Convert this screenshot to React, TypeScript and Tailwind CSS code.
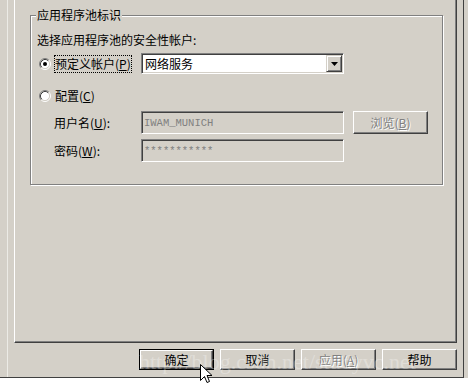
import React from "react";

const sunken =
  "border border-t-[#808080] border-l-[#808080] border-b-white border-r-white shadow-[inset_1px_1px_0_#404040,inset_-1px_-1px_0_#d4d0c8] p-[1px]";
const raised =
  "border border-t-white border-l-white border-b-[#404040] border-r-[#404040] shadow-[inset_-1px_-1px_0_#808080]";
const disabledText = "text-[#808080] [text-shadow:1px_1px_0_#fff]";

function Radio({ checked }: { checked?: boolean }) {
  return (
    <svg width="12" height="12" viewBox="0 0 12 12" className="shrink-0">
      <circle cx="6" cy="6" r="4.5" fill="#fff" />
      <path d="M2.11 9.89 A5.5 5.5 0 0 1 9.89 2.11" fill="none" stroke="#808080" />
      <path d="M9.89 2.11 A5.5 5.5 0 0 1 2.11 9.89" fill="none" stroke="#fff" />
      <path d="M2.82 9.18 A4.5 4.5 0 0 1 9.18 2.82" fill="none" stroke="#404040" />
      <path d="M9.18 2.82 A4.5 4.5 0 0 1 2.82 9.18" fill="none" stroke="#d4d0c8" />
      {checked && <circle cx="6" cy="6" r="2" fill="#000" />}
    </svg>
  );
}

function Key({ k }: { k: string }) {
  return (
    <>
      (<span className="underline underline-offset-1">{k}</span>)
    </>
  );
}

function Button({
  children,
  disabled,
  primary,
  className = "",
}: {
  children: React.ReactNode;
  disabled?: boolean;
  primary?: boolean;
  className?: string;
}) {
  const face = (
    <div
      className={`flex h-full w-full items-center justify-center ${raised} ${
        disabled ? disabledText : ""
      }`}
    >
      {children}
    </div>
  );
  return (
    <div className={`h-[21px] w-[75px] ${primary ? "border border-black" : ""} ${className}`}>
      {face}
    </div>
  );
}

export default function App() {
  return (
    <div className="relative h-[383px] w-[468px] overflow-hidden bg-white font-['Noto_Sans_CJK_SC',sans-serif] text-[12px] leading-[16px] text-black">
      <div className="h-[378px] bg-[#d4d0c8]">
        <div className="h-[378px] w-[464px] border-r border-b border-[#404040] pl-[7px]">
          <div className="h-full border-l border-[#ecebe6] px-[6px]">
            {/* tab page */}
            <div className="h-[343px] border-l border-r border-b border-l-white border-r-[#404040] border-b-[#404040] pl-[15px] pt-[15px] shadow-[inset_-1px_-1px_0_#808080]">
              {/* group box */}
              <div className="relative h-[170px] w-[413px] border border-[#808080] pl-[6px] pt-[16px] shadow-[inset_1px_1px_0_#fff,1px_1px_0_#fff]">
                <div className="absolute left-[5px] top-[-9px] bg-[#d4d0c8] px-[1px]">
                  应用程序池标识
                </div>
                <div>选择应用程序池的安全性帐户:</div>

                <div className="mt-[5px] flex h-[21px] items-center">
                  <div className="flex w-[104px] items-center">
                    <div className="ml-[2px]">
                      <Radio checked />
                    </div>
                    <span className="ml-[3px] border border-dotted border-black px-[0px] leading-[16px]">
                      预定义帐户<Key k="P" />
                    </span>
                  </div>
                  <div className={`flex h-[21px] w-[203px] bg-white ${sunken}`}>
                    <div className="flex-1 pl-[2px] leading-[17px]">网络服务</div>
                    <div
                      className="flex h-full w-[16px] items-center justify-center border border-t-[#d4d0c8] border-l-[#d4d0c8] border-b-[#404040] border-r-[#404040] bg-[#d4d0c8] shadow-[inset_1px_1px_0_#fff,inset_-1px_-1px_0_#808080]"
                    >
                      <svg width="7" height="4" viewBox="0 0 7 4">
                        <polygon points="0,0 7,0 3.5,4" fill="#000" />
                      </svg>
                    </div>
                  </div>
                </div>

                <div className="mt-[11px] flex h-[21px] items-center">
                  <div className="ml-[2px]">
                    <Radio />
                  </div>
                  <span className="ml-[4px]">
                    配置<Key k="C" />
                  </span>
                </div>

                <div className="mt-[5px] flex h-[23px] items-center">
                  <div className="w-[104px] pl-[17px]">
                    用户名<Key k="U" />:
                  </div>
                  <div
                    className={`flex h-[23px] w-[203px] items-center bg-[#d4d0c8] pl-[2px] font-['Liberation_Mono',monospace] text-[10.5px] text-[#808080] ${sunken}`}
                  >
                    IWAM_MUNICH
                  </div>
                  <Button disabled className="ml-[9px] !h-[23px]">
                    浏览<Key k="B" />
                  </Button>
                </div>

                <div className="mt-[5px] flex h-[23px] items-center">
                  <div className="w-[104px] pl-[17px]">
                    密码<Key k="W" />:
                  </div>
                  <div
                    className={`flex h-[23px] w-[203px] items-center bg-[#d4d0c8] pl-[2px] font-['Liberation_Mono',monospace] text-[10.5px] text-[#808080] ${sunken}`}
                  >
                    ***********
                  </div>
                </div>
              </div>
            </div>

            {/* dialog buttons */}
            <div className="ml-[125px] mt-[6px] flex gap-[6px]">
              <Button primary>确定</Button>
              <Button>取消</Button>
              <Button disabled>
                应用<Key k="A" />
              </Button>
              <Button>帮助</Button>
            </div>
          </div>
        </div>
      </div>

      {/* watermark */}
      <div className="pointer-events-none absolute left-[139px] top-[350px] whitespace-nowrap font-['Liberation_Serif',serif] text-[22px] leading-[24px] text-white/30">
        http://blog.csdn.net/studyvc.net
      </div>

      {/* mouse cursor */}
      <svg
        className="absolute left-[200px] top-[364px]"
        width="13"
        height="20"
        viewBox="0 0 13 20"
      >
        <path
          d="M0.5 0.5 L0.5 16.5 L4.5 12.5 L7 18.5 L9.5 17.5 L7 11.5 L12 11.5 Z"
          fill="#fff"
          stroke="#000"
          strokeLinejoin="miter"
        />
      </svg>
    </div>
  );
}
